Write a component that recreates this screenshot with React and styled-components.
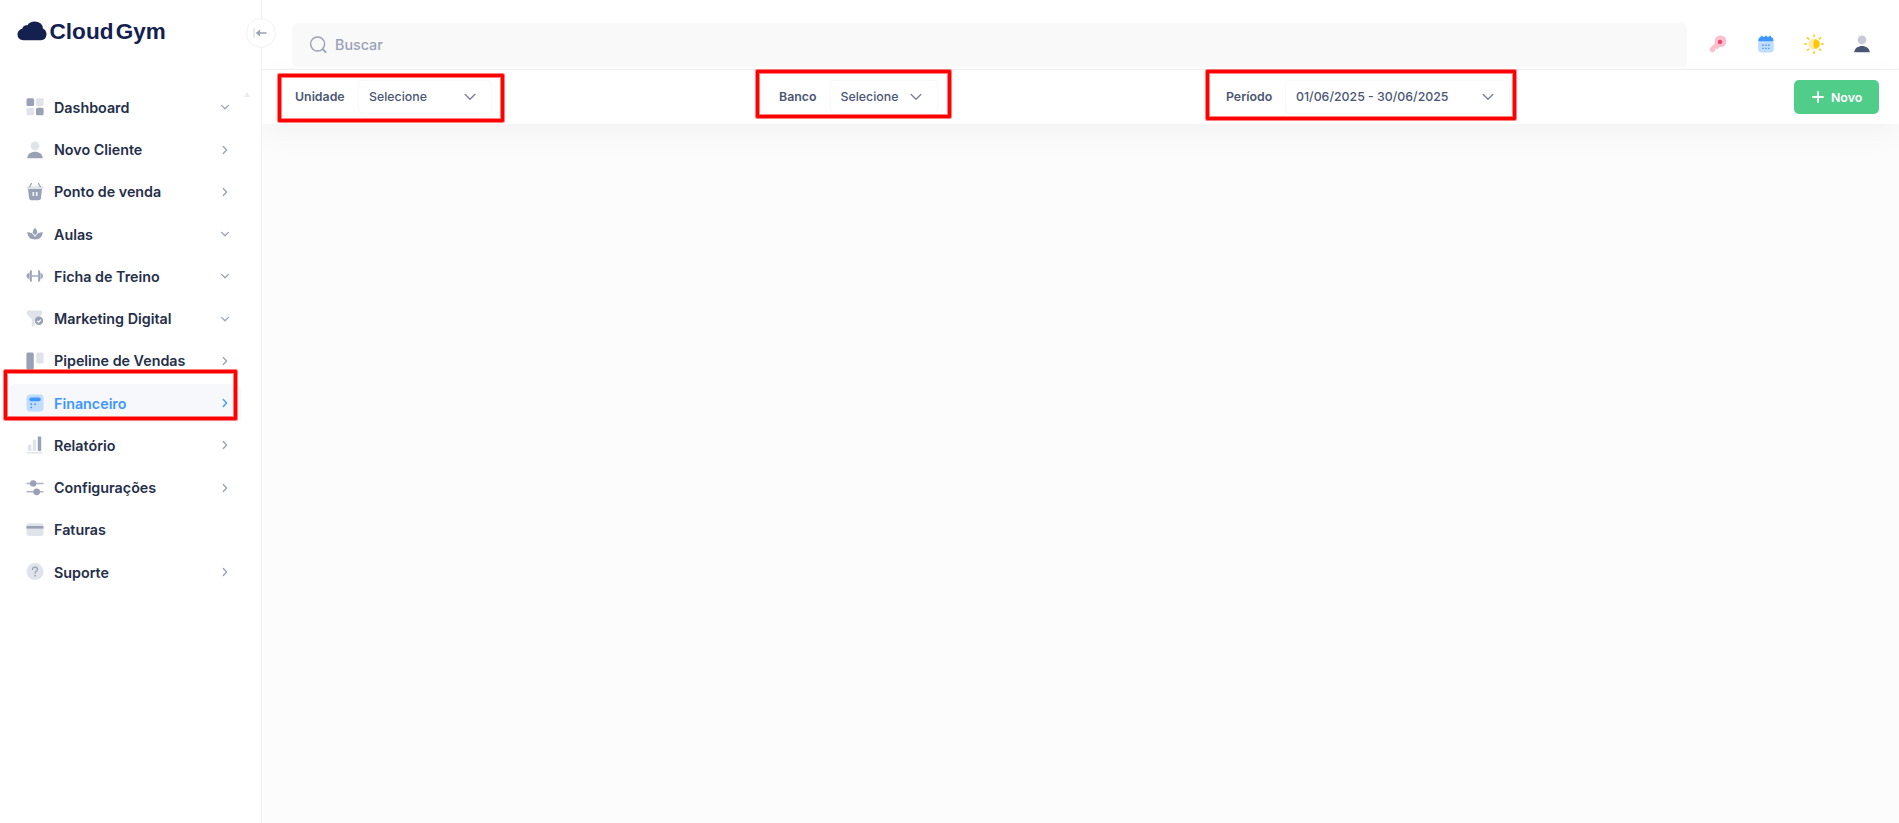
import React from 'react';
import styled, { createGlobalStyle, css } from 'styled-components';

const GlobalStyle = createGlobalStyle`
  * {
    box-sizing: border-box;
  }

  body {
    margin: 0;
    background: #fcfcfc;
    font-family: Inter, 'Noto Sans', sans-serif;
    font-size: 13px;
    overflow: hidden;
  }

  svg {
    display: block;
    flex-shrink: 0;
  }
`;

const Chevron = ({ down }) => (
  <svg width="10" height="10" viewBox="0 0 10 10" fill="none" stroke="currentColor" strokeWidth="1.3" strokeLinecap="round" strokeLinejoin="round">
    <path d={down ? 'M1.5 3.4 L5 6.7 L8.5 3.4' : 'M3.3 1.5 L6.6 5 L3.3 8.5'} />
  </svg>
);

const SelectArrow = () => (
  <svg width="12" height="12" viewBox="0 0 12 12" fill="none" stroke="#7e8299" strokeWidth="1.4" strokeLinecap="round" strokeLinejoin="round">
    <path d="M1.2 3.4 L6 8.2 L10.8 3.4" />
  </svg>
);

const Icon = ({ children, size = 18 }) => (
  <svg width={size} height={size} viewBox="0 0 18 18">{children}</svg>
);

const dark = '#99a1b7';
const light = '#e0e3ea';

const icons = {
  dashboard: (
    <Icon>
      <rect x="0.5" y="0.3" width="7.6" height="7.6" rx="1.5" fill={dark} />
      <rect x="10" y="0.3" width="7.6" height="7.6" rx="1.5" fill={light} />
      <rect x="0.5" y="9.7" width="7.6" height="7.6" rx="1.5" fill={light} />
      <rect x="10" y="9.7" width="7.6" height="7.6" rx="1.5" fill={dark} />
    </Icon>
  ),
  user: (
    <Icon>
      <circle cx="9" cy="4.8" r="4.4" fill={light} />
      <path d="M1.3 17.2 C1.3 8.6 16.7 8.6 16.7 17.2 Z" fill={dark} />
    </Icon>
  ),
  basket: (
    <Icon>
      <rect x="0.5" y="3.2" width="17" height="2.8" rx="1.2" fill={light} />
      <path d="M2 6 H16 L14.9 15.2 Q14.6 17.3 12.7 17.3 H5.3 Q3.4 17.3 3.1 15.2 Z" fill={dark} />
      <path d="M5.5 0.5 L3.7 3.8 M12.5 0.5 L14.3 3.8" stroke={dark} strokeWidth="1.2" strokeLinecap="round" />
      <path d="M7.3 9 V13 M10.7 9 V13" stroke="#f1f3f8" strokeWidth="1.7" />
    </Icon>
  ),
  lotus: (
    <Icon>
      <path d="M9 2.8 Q11.8 5.5 11.3 7.8 Q10.5 9 9 10.2 Q7.5 9 6.7 7.8 Q6.2 5.5 9 2.8 Z" fill={dark} />
      <path d="M1.2 7 Q6.7 7.2 9 12 Q11.3 7.2 16.8 7 Q16.4 14.4 9 14.4 Q1.6 14.4 1.2 7 Z" fill={dark} />
    </Icon>
  ),
  dumbbell: (
    <Icon>
      <path d="M5.8 3 V15 Q3.5 14.8 3.3 12.3 Q0.5 11.6 0.5 9 Q0.5 6.4 3.3 5.7 Q3.5 3.2 5.8 3 Z" fill={dark} />
      <path d="M12.2 3 V15 Q14.4 14.8 14.6 12.3 Q17 11.6 17 9 Q17 6.4 14.6 5.7 Q14.4 3.2 12.2 3 Z" fill={dark} />
      <path d="M3.4 4 V14 M14.7 4 V14" stroke="#fff" strokeWidth="0.5" />
      <path d="M6 9 H12" stroke={dark} strokeWidth="1.3" />
    </Icon>
  ),
  funnel: (
    <Icon>
      <path d="M2.4 0.4 H14.6 Q16 0.4 16 1.8 V3.5 Q16 4.5 15.2 5.2 L12.8 7.5 Q8.5 8 8.3 12 L9 14.4 L6.7 16.7 Q5.8 17 5.8 16 V9.3 L1.8 5.2 Q1 4.5 1 3.5 V1.8 Q1 0.4 2.4 0.4 Z" fill={light} />
      <circle cx="13" cy="10.8" r="4.2" fill={dark} />
      <path d="M11.2 10.8 L12.6 12.1 L14.9 9.6" stroke="#fff" strokeWidth="1.1" fill="none" />
    </Icon>
  ),
  pipeline: (
    <Icon>
      <rect x="0.4" y="0.4" width="7.4" height="17" rx="1.5" fill={dark} />
      <rect x="10.2" y="0.4" width="7.4" height="11" rx="1.5" fill={light} />
    </Icon>
  ),
  calculator: (
    <Icon>
      <rect x="0.5" y="0.5" width="17" height="17" rx="4" fill="#c0dcff" />
      <rect x="3.3" y="3.4" width="11.4" height="3.9" rx="1.8" fill="#3e97ff" />
      <g fill="#3e97ff">
        <circle cx="5.3" cy="10.2" r="0.9" />
        <circle cx="9.1" cy="10.2" r="0.9" />
        <circle cx="5.3" cy="13.4" r="0.9" />
      </g>
    </Icon>
  ),
  chart: (
    <Icon>
      <rect x="2" y="8.7" width="3.4" height="6.3" rx="0.8" fill={light} />
      <rect x="6.8" y="3.7" width="3.4" height="11.3" rx="0.8" fill={light} />
      <rect x="11.8" y="0.5" width="3.4" height="14.5" rx="0.8" fill={dark} />
      <rect x="0.7" y="15.9" width="16" height="1.7" rx="0.8" fill={light} />
    </Icon>
  ),
  sliders: (
    <Icon>
      <path d="M0.5 4.4 H17.5 M0.5 12.8 H17.5" stroke={dark} strokeWidth="1.5" opacity="0.8" />
      <circle cx="7.2" cy="4.4" r="3.2" fill={dark} />
      <circle cx="10.7" cy="12.8" r="3.4" fill={dark} />
    </Icon>
  ),
  card: (
    <Icon>
      <rect x="0.5" y="2.2" width="17" height="12.8" rx="2.4" fill={light} />
      <rect x="0.5" y="5" width="17" height="2.6" fill={dark} />
    </Icon>
  ),
  help: (
    <Icon>
      <circle cx="9" cy="8.5" r="8.5" fill={light} />
      <path d="M6.5 6.4 Q6.6 4.1 9 4.1 Q11.4 4.1 11.4 6.3 Q11.4 7.5 10.2 8.2 Q9.1 8.9 9.1 10.2" stroke={dark} strokeWidth="1.3" fill="none" strokeLinecap="round" />
      <circle cx="9.1" cy="12.7" r="0.9" fill={dark} />
    </Icon>
  ),
};

const menu = [
  { label: 'Dashboard', icon: 'dashboard', arrow: 'down' },
  { label: 'Novo Cliente', icon: 'user', arrow: 'right' },
  { label: 'Ponto de venda', icon: 'basket', arrow: 'right' },
  { label: 'Aulas', icon: 'lotus', arrow: 'down' },
  { label: 'Ficha de Treino', icon: 'dumbbell', arrow: 'down' },
  { label: 'Marketing Digital', icon: 'funnel', arrow: 'down' },
  { label: 'Pipeline de Vendas', icon: 'pipeline', arrow: 'right' },
  { label: 'Financeiro', icon: 'calculator', arrow: 'right', active: true },
  { label: 'Relatório', icon: 'chart', arrow: 'right' },
  { label: 'Configurações', icon: 'sliders', arrow: 'right' },
  { label: 'Faturas', icon: 'card' },
  { label: 'Suporte', icon: 'help', arrow: 'right' },
];

const Logo = () => (
  <svg width="152" height="30" viewBox="0 0 152 30" fill="#14204f">
    <path d="M6.5 23.3 Q0.5 22.5 0.5 17.5 Q0.7 12.7 5.3 11.8 Q6.2 7.6 10.4 8.2 Q13 4.4 18.3 4.6 Q25.4 5.2 25.9 11.5 Q29.7 13.2 29.5 17.8 Q29 22.8 24 23.3 Z" />
    <g fontFamily="'Liberation Sans', sans-serif" fontWeight="700" fontSize="22.5">
      <text x="32.5" y="22.3" textLength="64" lengthAdjust="spacingAndGlyphs">Cloud</text>
      <text x="98.8" y="22.3" textLength="50" lengthAdjust="spacingAndGlyphs">Gym</text>
    </g>
  </svg>
);

const KeyIcon = () => (
  <Icon>
    <path d="M1.5 12.5 L6 8 Q5 1 11.5 0.6 Q17.3 1 17.4 6.5 Q16.8 12.6 10.3 12.3 L8.3 14.2 L6.8 13.3 L6.2 15.4 L4.6 17 Q2.6 18 1.2 16.6 Q-0.2 14.5 1.5 12.5 Z" fill="#fcbfcc" />
    <circle cx="11" cy="6.9" r="2.2" fill="#f1416c" />
  </Icon>
);

const CalendarIcon = () => (
  <Icon>
    <rect x="1" y="5.5" width="15.8" height="12" rx="4" fill="#c0dcff" />
    <path d="M1.2 6.3 Q1.4 2.3 3.8 2 V0.8 H5.6 V1.8 H8 V0.8 H9.8 V1.8 H12.2 V0.8 H14 V2 Q16.4 2.3 16.6 6.3 Z" fill="#3e97ff" />
    <path d="M5.2 10.3 H13 M5.2 13.4 H13" stroke="#3e97ff" strokeWidth="1.4" strokeDasharray="1.7 1.2" opacity="0.85" />
  </Icon>
);

const SunIcon = () => (
  <svg width="20" height="20" viewBox="0 0 20 20">
    <circle cx="9.8" cy="10" r="5.6" fill="#ffedae" />
    <path d="M11 5.3 Q15.8 5.8 15.8 10 Q15.8 14.2 11 14.7 Q9.2 12.7 9.2 10 Q9.2 7.3 11 5.3 Z" fill="#ffc700" />
    <path d="M10 0.9 V2.4 M10 17.8 V19.3 M0.8 10 H2.3 M17.7 10 H19.2 M3.4 3.8 L4.6 4.9 M15.4 15.2 L16.6 16.3 M3.4 16.3 L4.6 15.2 M15.4 4.9 L16.6 3.8" stroke="#ffc700" strokeWidth="1.5" strokeLinecap="round" />
  </svg>
);

const ProfileIcon = () => (
  <Icon>
    <circle cx="9" cy="4.9" r="4.3" fill="#c8cad5" />
    <path d="M1.2 17.3 C1.8 8.8 16.2 8.8 16.8 17.3 Z" fill="#4b5675" />
  </Icon>
);

const Field = ({ label, value, gap, width, highlight }) => (
  <FieldGroup $gap={gap}>
    <FieldLabel>{label}</FieldLabel>
    <Select $width={width}>
      {value}
      <SelectArrow />
    </Select>
    <Highlight {...highlight} />
  </FieldGroup>
);

const App = () => {
  return (
    <Page>
      <GlobalStyle />
      <Sidebar>
        <LogoArea>
          <Logo />
        </LogoArea>
        <Toggle>
          <svg width="14" height="12" viewBox="0 0 14 12" fill="none">
            <path d="M1 1 V11" stroke="#dbdfe9" strokeWidth="1.3" />
            <path d="M6 6 H13" stroke="#99a1b7" strokeWidth="1.6" strokeLinecap="round" />
            <path d="M2.8 6 L7 2.6 V9.4 Z" fill="#99a1b7" />
          </svg>
        </Toggle>
        <ScrollUp />
        <Nav>
          {menu.map((item) => (
            <NavItem key={item.label} $active={item.active}>
              {icons[item.icon]}
              <NavLabel>{item.label}</NavLabel>
              {item.arrow && <Chevron down={item.arrow === 'down'} />}
              {item.active && <Highlight $left={-5} $top={-14} $width={233} $height={50} />}
            </NavItem>
          ))}
        </Nav>
      </Sidebar>
      <Main>
        <Header>
          <Search>
            <svg width="18" height="18" viewBox="0 0 18 18" fill="none" stroke="#99a1b7" strokeWidth="1.4">
              <circle cx="8.6" cy="8" r="7" />
              <path d="M13.6 13 L17.2 16.6" strokeWidth="1.8" />
            </svg>
            Buscar
          </Search>
          <HeaderIcons>
            <HeaderIcon><KeyIcon /></HeaderIcon>
            <HeaderIcon><CalendarIcon /></HeaderIcon>
            <HeaderIcon><SunIcon /></HeaderIcon>
            <HeaderIcon><ProfileIcon /></HeaderIcon>
          </HeaderIcons>
        </Header>
        <Toolbar>
          <Field label="Unidade" value="Selecione" width={134} gap={63} highlight={{ $left: -17, $top: -6, $width: 226, $height: 48 }} />
          <Field label="Banco" value="Selecione" width={108} gap={50.5} highlight={{ $left: -23, $top: -10, $width: 195, $height: 48 }} />
          <Field label="Período" value="01/06/2025 - 30/06/2025" width={225} gap={59} highlight={{ $left: -20, $top: -10, $width: 310, $height: 50 }} />
          <NewButton>
            <svg width="12" height="12" viewBox="0 0 12 12" stroke="#fff" strokeWidth="1.8" strokeLinecap="round">
              <path d="M6 1 V11 M1 6 H11" />
            </svg>
            Novo
          </NewButton>
        </Toolbar>
      </Main>
    </Page>
  );
};

export default App;

const Page = styled.div`
  display: flex;
  height: 100vh;
`;

const Sidebar = styled.aside`
  position: relative;
  width: 262px;
  flex-shrink: 0;
  background: #fff;
  border-right: 1px solid #f1f1f2;
  z-index: 2;
`;

const LogoArea = styled.div`
  height: 70px;
  padding: 17px 0 0 17px;
`;

const Toggle = styled.button`
  position: absolute;
  top: 18px;
  right: -15px;
  width: 30px;
  height: 30px;
  padding: 0 2px 0 0;
  display: flex;
  align-items: center;
  justify-content: center;
  background: #fff;
  border: 1px solid #f1f1f2;
  border-radius: 50%;
`;

const ScrollUp = styled.span`
  position: absolute;
  top: 92px;
  right: 11px;
  border: 3px solid transparent;
  border-top: 0;
  border-bottom: 5px solid #ececee;
`;

const Nav = styled.nav`
  display: flex;
  flex-direction: column;
  gap: 4.25px;
  padding: 18.4px 20px 0 9px;
`;

const NavItem = styled.a`
  position: relative;
  display: flex;
  align-items: center;
  height: 38px;
  padding: 0 11.5px 0 16.5px;
  border-radius: 6px;
  color: #99a1b7;

  ${({ $active }) => $active && css`
    background: #f7f8fc;
    color: #3e97ff;

    ${NavLabel} {
      color: #3e97ff;
    }
  `}
`;

const NavLabel = styled.span`
  flex: 1;
  margin-left: 10.5px;
  color: #252f4a;
  font-size: 14.3px;
  font-weight: 600;
  white-space: nowrap;
`;

const Highlight = styled.div`
  position: absolute;
  left: ${({ $left }) => $left}px;
  top: ${({ $top }) => $top}px;
  width: ${({ $width }) => $width}px;
  height: ${({ $height }) => $height}px;
  border: 3px solid #ff0000;
  border-radius: 1px;
  box-shadow: 0 0 0 1px rgba(255, 0, 0, 0.5), inset 0 0 0 1px rgba(255, 0, 0, 0.5);
  pointer-events: none;
  z-index: 3;
`;

const Main = styled.main`
  flex: 1;
  min-width: 0;
`;

const Header = styled.header`
  display: flex;
  height: 70px;
  padding: 23px 13px 0 30px;
  background: #fff;
  border-bottom: 1px solid #f1f1f2;
`;

const Search = styled.div`
  display: flex;
  align-items: center;
  gap: 8px;
  flex: 1;
  height: 44px;
  padding: 0 0 1px 17px;
  background: #f9f9f9;
  border-radius: 6px;
  color: #99a1b7;
  font-size: 14.3px;
  font-weight: 500;
`;

const HeaderIcons = styled.div`
  display: flex;
  margin-left: 7px;
  height: 42px;
`;

const HeaderIcon = styled.button`
  display: flex;
  align-items: center;
  justify-content: center;
  width: 48px;
  padding: 0;
  background: none;
  border: 0;
`;

const Toolbar = styled.div`
  display: grid;
  grid-template-columns: 484px 447px 1fr auto;
  align-items: center;
  height: 54px;
  padding: 0 20px 0 33px;
  background: #fff;
  box-shadow: 0 10px 30px 0 rgba(0, 0, 0, 0.04);
`;

const FieldGroup = styled.div`
  position: relative;
  display: grid;
  grid-template-columns: ${({ $gap }) => $gap}px auto;
  align-items: center;
  justify-self: start;
  color: #4b5675;
  font-size: 12.35px;
`;

const FieldLabel = styled.label`
  padding-bottom: 1px;
  font-weight: 600;
`;

const Select = styled.div`
  display: flex;
  align-items: center;
  justify-content: space-between;
  width: ${({ $width }) => $width}px;
  height: 34px;
  padding: 0 15px 1px 10px;
  border: 1px solid #f9f9f9;
  border-radius: 5px;
  font-weight: 500;
  white-space: nowrap;
`;

const NewButton = styled.button`
  display: flex;
  align-items: center;
  gap: 7px;
  width: 85px;
  height: 34px;
  padding: 0 0 0 18px;
  background: #50cd89;
  border: 0;
  border-radius: 5px;
  color: #fff;
  font-family: inherit;
  font-size: 12.35px;
  font-weight: 600;
`;
